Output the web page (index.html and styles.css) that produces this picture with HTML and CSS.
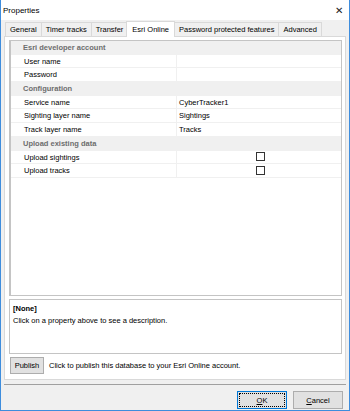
FILE: index.html
```html
<!DOCTYPE html>
<html lang="en">
<head>
    <meta charset="UTF-8">
    <title>Properties</title>
    <link rel="stylesheet" href="styles.css">
</head>
<body>
    <div class="window">
        <div class="titlebar">
            <span class="title">Properties</span>
            <span class="close">&#x2715;</span>
        </div>

        <div class="content">
            <div class="tabs">
                <div class="tab">General</div>
                <div class="tab">Timer tracks</div>
                <div class="tab">Transfer</div>
                <div class="tab active">Esri Online</div>
                <div class="tab">Password protected features</div>
                <div class="tab">Advanced</div>
            </div>

            <div class="tabpage">
                <div class="grid">
                    <div class="row category">Esri developer account</div>
                    <div class="row"><span class="name">User name</span><span class="value"></span></div>
                    <div class="row"><span class="name">Password</span><span class="value"></span></div>
                    <div class="row category">Configuration</div>
                    <div class="row"><span class="name">Service name</span><span class="value">CyberTracker1</span></div>
                    <div class="row"><span class="name">Sighting layer name</span><span class="value">Sightings</span></div>
                    <div class="row"><span class="name">Track layer name</span><span class="value">Tracks</span></div>
                    <div class="row category">Upload existing data</div>
                    <div class="row"><span class="name">Upload sightings</span><span class="value center"><span class="checkbox"></span></span></div>
                    <div class="row"><span class="name">Upload tracks</span><span class="value center"><span class="checkbox"></span></span></div>
                </div>

                <div class="desc">
                    <div class="desc-title">[None]</div>
                    <div class="desc-text">Click on a property above to see a description.</div>
                </div>

                <div class="publish-row">
                    <button class="btn publish">Publish</button>
                    <span>Click to publish this database to your Esri Online account.</span>
                </div>
            </div>

            <div class="footer">
                <button class="btn default"><span class="focus"><u>O</u>K</span></button>
                <button class="btn"><u>C</u>ancel</button>
            </div>
        </div>
    </div>
</body>
</html>
```

FILE: styles.css
```css
* {
    margin: 0;
    padding: 0;
    box-sizing: border-box;
}

body {
    width: 350px;
    height: 411px;
    overflow: hidden;
    font-family: 'Liberation Sans', Arial, sans-serif;
    font-size: 7.5px;
    color: #000;
    background: #f0f0f0;
}

.window {
    width: 350px;
    height: 411px;
    display: flex;
    flex-direction: column;
    border: 1px solid #3e8ddd;
    border-top: none;
}

.titlebar {
    height: 20px;
    background: #fff;
    display: flex;
    align-items: center;
    justify-content: space-between;
    padding: 0 6px 0 2px;
}

.title {
    font-size: 8px;
}

.close {
    font-size: 10px;
    color: #222;
}

.content {
    flex: 1;
    display: flex;
    flex-direction: column;
    padding: 1px 3px 0 3px;
}

/* Tabs */
.tabs {
    display: flex;
    padding-left: 1px;
    height: 15px;
    align-items: flex-end;
    position: relative;
    z-index: 1;
}

.tab {
    height: 14px;
    line-height: 13px;
    padding: 0 4px;
    border: 1px solid #d9d9d9;
    border-bottom: none;
    margin-right: -1px;
    background: #f0f0f0;
}

.tab.active {
    height: 16px;
    line-height: 15px;
    background: #fff;
    margin: 0 -1px -1px -1px;
    padding: 0 5px;
    position: relative;
    z-index: 2;
}

.tabpage {
    background: #fff;
    border: 1px solid #d9d9d9;
    height: 344px;
    padding: 3px 3px 5px 4px;
    display: flex;
    flex-direction: column;
}

/* Property grid */
.grid {
    height: 256px;
    border: 1px solid #c4c4c4;
    border-left-width: 2px;
    background: #fff;
}

.row {
    display: flex;
    height: 13.7px;
    line-height: 13px;
    border-bottom: 1px solid #f0f0f0;
}

.row.category {
    background: #f0f0f0;
    color: #6d6d6d;
    font-weight: bold;
    padding-left: 12px;
}

.name {
    width: 166px;
    padding-left: 12px;
    border-right: 1px solid #f0f0f0;
    border-left: 1px solid #fff;
}

.value {
    flex: 1;
    padding-left: 2px;
}

.value.center {
    display: flex;
    align-items: center;
    justify-content: center;
}

.checkbox {
    display: block;
    width: 9px;
    height: 9px;
    border: 1px solid #333;
    background: #fff;
}

/* Description */
.desc {
    margin-top: 3px;
    height: 55px;
    border: 1px solid #c4c4c4;
    padding: 4px 3px;
}

.desc-title {
    font-weight: bold;
    margin-bottom: 3px;
}

.publish-row {
    margin-top: 3px;
    display: flex;
    align-items: center;
    gap: 5px;
    padding-left: 1px;
}

.btn {
    font-family: 'Liberation Sans', Arial, sans-serif;
    font-size: 7.5px;
    background: #e1e1e1;
    border: 1px solid #adadad;
    color: #000;
    height: 17px;
}

.publish {
    width: 34px;
}

/* Footer */
.footer {
    margin-top: 4px;
    border-top: 1px solid #a0a0a0;
    flex: 1;
    display: flex;
    justify-content: flex-end;
    align-items: flex-start;
    gap: 6px;
    padding: 6px 3px 0 0;
}

.footer .btn {
    width: 50px;
    height: 18px;
}

.btn.default {
    border-color: #0078d7;
    padding: 1px;
}

.focus {
    display: block;
    height: 100%;
    line-height: 14px;
    border: 1px dotted #000;
}
```
